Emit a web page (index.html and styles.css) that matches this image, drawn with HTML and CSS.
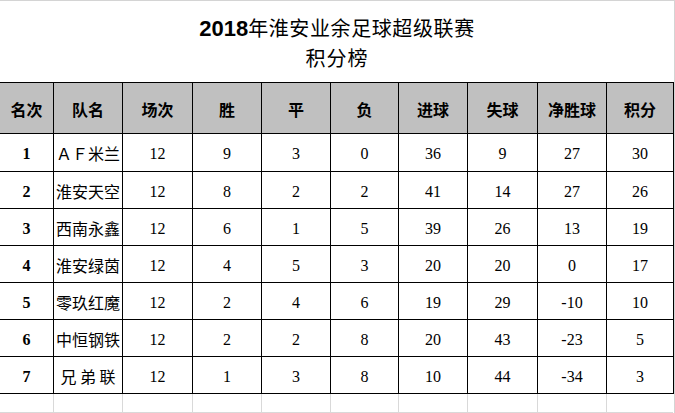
FILE: index.html
```html
<!DOCTYPE html>
<html lang="zh-CN">
<head>
<meta charset="utf-8">
<title>2018年淮安业余足球超级联赛 积分榜</title>
<link rel="stylesheet" href="styles.css">
</head>
<body>
<div class="sheet">
  <div class="title">
    <div class="title-line1"><span class="year">2018</span>年淮安业余足球超级联赛</div>
    <div class="title-line2">积分榜</div>
  </div>
  <div class="table">
    <div class="cell head">名次</div>
    <div class="cell head">队名</div>
    <div class="cell head">场次</div>
    <div class="cell head">胜</div>
    <div class="cell head">平</div>
    <div class="cell head">负</div>
    <div class="cell head">进球</div>
    <div class="cell head">失球</div>
    <div class="cell head">净胜球</div>
    <div class="cell head">积分</div>

    <div class="cell rank">1</div><div class="cell team">ＡＦ米兰</div><div class="cell num">12</div><div class="cell num">9</div><div class="cell num">3</div><div class="cell num">0</div><div class="cell num">36</div><div class="cell num">9</div><div class="cell num">27</div><div class="cell num">30</div>
    <div class="cell rank">2</div><div class="cell team">淮安天空</div><div class="cell num">12</div><div class="cell num">8</div><div class="cell num">2</div><div class="cell num">2</div><div class="cell num">41</div><div class="cell num">14</div><div class="cell num">27</div><div class="cell num">26</div>
    <div class="cell rank">3</div><div class="cell team">西南永鑫</div><div class="cell num">12</div><div class="cell num">6</div><div class="cell num">1</div><div class="cell num">5</div><div class="cell num">39</div><div class="cell num">26</div><div class="cell num">13</div><div class="cell num">19</div>
    <div class="cell rank">4</div><div class="cell team">淮安绿茵</div><div class="cell num">12</div><div class="cell num">4</div><div class="cell num">5</div><div class="cell num">3</div><div class="cell num">20</div><div class="cell num">20</div><div class="cell num">0</div><div class="cell num">17</div>
    <div class="cell rank">5</div><div class="cell team">零玖红魔</div><div class="cell num">12</div><div class="cell num">2</div><div class="cell num">4</div><div class="cell num">6</div><div class="cell num">19</div><div class="cell num">29</div><div class="cell num">-10</div><div class="cell num">10</div>
    <div class="cell rank">6</div><div class="cell team">中恒钢铁</div><div class="cell num">12</div><div class="cell num">2</div><div class="cell num">2</div><div class="cell num">8</div><div class="cell num">20</div><div class="cell num">43</div><div class="cell num">-23</div><div class="cell num">5</div>
    <div class="cell rank">7</div><div class="cell team spaced">兄 弟 联</div><div class="cell num">12</div><div class="cell num">1</div><div class="cell num">3</div><div class="cell num">8</div><div class="cell num">10</div><div class="cell num">44</div><div class="cell num">-34</div><div class="cell num">3</div>
  </div>
  <div class="grid-empty">
    <div class="blank"></div><div class="blank"></div><div class="blank"></div><div class="blank"></div><div class="blank"></div>
    <div class="blank"></div><div class="blank"></div><div class="blank"></div><div class="blank"></div><div class="blank"></div>
  </div>
</div>
</body>
</html>
```
FILE: styles.css
```css
html, body {
  margin: 0;
  padding: 0;
  background: #ffffff;
}

.sheet {
  width: 674px;
  border-top: 1px solid #d4d4d4;
  border-right: 1px solid #d4d4d4;
  font-family: "Noto Sans CJK SC", sans-serif;
  color: #000;
}

.title {
  height: 81px;
  box-sizing: border-box;
  padding-top: 13px;
  text-align: center;
}

.title-line1 {
  font-size: 20px;
  letter-spacing: 0.6px;
  line-height: 28px;
  height: 28px;
  white-space: nowrap;
}

.year {
  font-family: "Liberation Sans", sans-serif;
  font-weight: 700;
  font-size: 22px;
  letter-spacing: 0;
}

.title-line2 {
  font-size: 20px;
  letter-spacing: 1px;
  line-height: 32px;
  height: 32px;
}

.table {
  display: grid;
  grid-template-columns: 53px 68px 69px 68px 68px 67px 68px 69px 68px 66px;
  grid-template-rows: 50px 37px 36px 36px 36px 36px 36px 36px;
  gap: 1px;
  background: #000;
  border-top: 1px solid #000;
  border-right: 1px solid #000;
  border-bottom: 1px solid #000;
  width: 673px;
}

.cell {
  background: #fff;
  display: flex;
  align-items: center;
  justify-content: center;
  white-space: nowrap;
  overflow: hidden;
}

.head {
  background: #c0c0c0;
  font-weight: 700;
  font-size: 16px;
  padding-top: 2px;
}

.rank {
  font-family: "Liberation Serif", serif;
  font-weight: 700;
  font-size: 16px;
  padding-top: 3px;
}

.team {
  font-size: 16px;
  font-weight: 400;
  padding-top: 1px;
}

.spaced {
  white-space: pre;
}

.num {
  font-family: "Liberation Serif", serif;
  font-size: 16px;
  padding-top: 3px;
}

.grid-empty {
  display: grid;
  grid-template-columns: 53px 68px 69px 68px 68px 67px 68px 69px 68px 66px;
  column-gap: 1px;
  background: #d9d9d9;
  border-bottom: 1px solid #d9d9d9;
  width: 673px;
}

.blank {
  height: 18px;
  background: #fff;
}
```
